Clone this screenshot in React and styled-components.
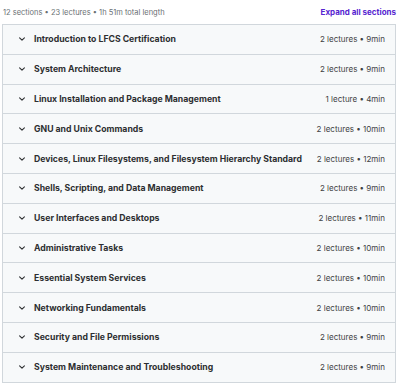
import React from "react";
import styled, { createGlobalStyle } from "styled-components";

const GlobalStyle = createGlobalStyle`
  body {
    margin: 0;
    background: #ffffff;
    font-family: Inter, "Noto Sans", sans-serif;
  }
`;

const Wrapper = styled.div`
  width: 400px;
  padding: 0 4px 0 2px;
  box-sizing: border-box;
`;

const Header = styled.div`
  display: flex;
  justify-content: space-between;
  align-items: center;
  height: 24px;
  padding: 0 0 0 1px;
  box-sizing: border-box;
`;

const Summary = styled.span`
  font-size: 7.5px;
  color: #6a6f73;
`;

const ExpandAll = styled.a`
  font-size: 8px;
  font-weight: 700;
  color: #5624d0;
  cursor: pointer;
`;

const Accordion = styled.div`
  border: 1px solid #d1d7dc;
  border-bottom: none;
`;

const Row = styled.div`
  display: flex;
  align-items: center;
  height: 28.8px;
  padding: 0 10px 0 15px;
  background: #f7f9fa;
  border-bottom: 1px solid #d1d7dc;
`;

const Chevron = styled.svg`
  width: 8px;
  height: 8px;
  margin-right: 8px;
  flex-shrink: 0;
`;

const Title = styled.span`
  flex: 1;
  font-size: 8.7px;
  font-weight: 700;
  color: #2d2f31;
  white-space: nowrap;
`;

const Meta = styled.span`
  font-size: 8px;
  color: #3e4143;
  white-space: nowrap;
`;

const sections = [
  ["Introduction to LFCS Certification", "2 lectures • 9min"],
  ["System Architecture", "2 lectures • 9min"],
  ["Linux Installation and Package Management", "1 lecture • 4min"],
  ["GNU and Unix Commands", "2 lectures • 10min"],
  ["Devices, Linux Filesystems, and Filesystem Hierarchy Standard", "2 lectures • 12min"],
  ["Shells, Scripting, and Data Management", "2 lectures • 9min"],
  ["User Interfaces and Desktops", "2 lectures • 11min"],
  ["Administrative Tasks", "2 lectures • 10min"],
  ["Essential System Services", "2 lectures • 10min"],
  ["Networking Fundamentals", "2 lectures • 10min"],
  ["Security and File Permissions", "2 lectures • 9min"],
  ["System Maintenance and Troubleshooting", "2 lectures • 9min"],
];

export default function App() {
  return (
    <Wrapper>
      <GlobalStyle />
      <Header>
        <Summary>12 sections • 23 lectures • 1h 51m total length</Summary>
        <ExpandAll>Expand all sections</ExpandAll>
      </Header>
      <Accordion>
        {sections.map(([title, meta]) => (
          <Row key={title}>
            <Chevron viewBox="0 0 10 10">
              <path d="M2 3.5 L5 6.5 L8 3.5" fill="none" stroke="#2d2f31" strokeWidth="1.4" strokeLinecap="round" strokeLinejoin="round" />
            </Chevron>
            <Title>{title}</Title>
            <Meta>{meta}</Meta>
          </Row>
        ))}
      </Accordion>
    </Wrapper>
  );
}
